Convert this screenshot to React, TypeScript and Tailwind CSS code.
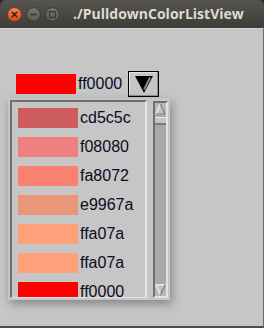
import React from 'react';

const items = ['cd5c5c', 'f08080', 'fa8072', 'e9967a', 'ffa07a', 'ffa07a', 'ff0000'];

const swatchBg: Record<string, string> = {
  cd5c5c: 'bg-[#cd5c5c]',
  f08080: 'bg-[#f08080]',
  fa8072: 'bg-[#fa8072]',
  e9967a: 'bg-[#e9967a]',
  ffa07a: 'bg-[#ffa07a]',
  ff0000: 'bg-[#ff0000]',
};

// Title bar button drawn as a small circle
function TitleButton({ kind }: { kind: 'close' | 'min' | 'max' }) {
  const id = `g-${kind}`;
  const top = kind === 'close' ? '#f48a5e' : '#76756f';
  const bottom = kind === 'close' ? '#dc461b' : '#5a5954';
  return (
    <svg width="15" height="15" viewBox="0 0 15 15">
      <defs>
        <linearGradient id={id} x1="0" y1="0" x2="0" y2="1">
          <stop offset="0" stopColor={top} />
          <stop offset="1" stopColor={bottom} />
        </linearGradient>
      </defs>
      <circle cx="7.5" cy="7.5" r="6.8" fill={`url(#${id})`} stroke={kind === 'close' ? '#9a3a18' : '#36352f'} strokeWidth="0.8" />
      {kind === 'close' && (
        <path d="M5.2 5.2 L9.8 9.8 M9.8 5.2 L5.2 9.8" stroke="#3b1a0c" strokeWidth="1.5" strokeLinecap="round" />
      )}
      {kind === 'min' && <path d="M4.3 7.5 H10.7" stroke="#3a3934" strokeWidth="1.6" />}
      {kind === 'max' && <rect x="4.6" y="4.6" width="5.8" height="5.8" fill="none" stroke="#3a3934" strokeWidth="1.3" />}
    </svg>
  );
}

function ScrollArrow({ up }: { up: boolean }) {
  return (
    <svg width="11" height="12" viewBox="0 0 11 12">
      {up ? (
        <>
          <polygon points="5.5,1 10,11 1,11" fill="#c2c2c2" />
          <path d="M1 11 L5.5 1" stroke="#ededed" strokeWidth="1.4" />
          <path d="M5.5 1 L10 11 L1 11" stroke="#7c7c7c" strokeWidth="1.2" fill="none" />
        </>
      ) : (
        <>
          <polygon points="1,1 10,1 5.5,11" fill="#c2c2c2" />
          <path d="M5.5 11 L1 1 L10 1" stroke="#ededed" strokeWidth="1.4" fill="none" />
          <path d="M10 1 L5.5 11" stroke="#7c7c7c" strokeWidth="1.2" />
        </>
      )}
    </svg>
  );
}

export default function App() {
  return (
    <div className="w-[264px] h-[328px] flex flex-col bg-[#2c2b28] overflow-hidden font-['Liberation_Sans',Arial,sans-serif]">
      {/* title bar */}
      <div className="h-[28px] shrink-0 rounded-t-[6px] bg-gradient-to-b from-[#57554f] to-[#3d3c38] flex items-center pl-[7px]">
        <div className="flex items-center gap-[4px]">
          <TitleButton kind="close" />
          <TitleButton kind="min" />
          <TitleButton kind="max" />
        </div>
        <span className="ml-[13px] text-[14px] font-bold text-[#dfdbd2] font-['Open_Sans',sans-serif] leading-none">
          ./PulldownColorListView
        </span>
      </div>

      {/* window body */}
      <div className="flex-1 bg-[#c6c6c6] border-t border-[#d4d4d4] border-b-2 border-b-[#4e4e4e] border-r border-r-[#6a6a6a] flex flex-col">
        {/* selected value + pulldown button */}
        <div className="flex items-center pl-[16px] pt-[42px]">
          <div className="w-[60px] h-[20px] bg-[#ff0000]" />
          <span className="w-[52px] pl-[2px] text-[16px] leading-[20px] text-[#0b0b22]">ff0000</span>
          <div className="w-[31px] h-[26px] border border-black flex items-center justify-center bg-[#c6c6c6] shadow-[inset_-1px_-1px_0_#8e8e8e,inset_1px_1px_0_#e4e4e4]">
            <svg width="18" height="17" viewBox="0 0 18 17">
              <polygon points="0,0 18,0 9,17" fill="#000" />
              <path d="M15.2 1.5 L9 13.6" stroke="#8a8a8a" strokeWidth="2" />
            </svg>
          </div>
        </div>

        {/* popup list */}
        <div className="ml-[8px] mt-[1px] w-[162px] h-[202px] bg-[#c6c6c6] p-[2px] flex gap-[6px] shadow-[2px_4px_9px_rgba(0,0,0,0.32)]">
          <div className="w-[137px] h-[198px] border-2 border-b border-t-[#6f6f6f] border-l-[#6f6f6f] border-b-[#e4e4e4] border-r-[#e4e4e4] overflow-hidden">
            <div className="flex flex-col gap-[9px] pt-[6px] pl-[6px]">
              {items.map((c, i) => (
                <div key={i} className="flex items-center h-[20px] shrink-0">
                  <div className={`w-[60px] h-[20px] shrink-0 ${swatchBg[c]}`} />
                  <span className="pl-[2px] text-[16px] leading-[18px] text-[#0b0b22]">{c}</span>
                </div>
              ))}
            </div>
          </div>

          {/* scrollbar */}
          <div className="mt-[1px] w-[15px] h-[197px] border-2 border-t-[#707070] border-l-[#707070] border-b-[#e2e2e2] border-r-[#e2e2e2] bg-[#a9a9a9] flex flex-col">
            <div className="h-[12px] flex justify-center bg-[#b8b8b8]">
              <ScrollArrow up />
            </div>
            <div className="mt-[2px] h-[8px] bg-[#c4c4c4] border-t border-[#ececec] border-b-2 border-b-[#7a7a7a]" />
            <div className="flex-1" />
            <div className="h-[12px] flex justify-center bg-[#b8b8b8]">
              <ScrollArrow up={false} />
            </div>
          </div>
        </div>
      </div>
    </div>
  );
}
